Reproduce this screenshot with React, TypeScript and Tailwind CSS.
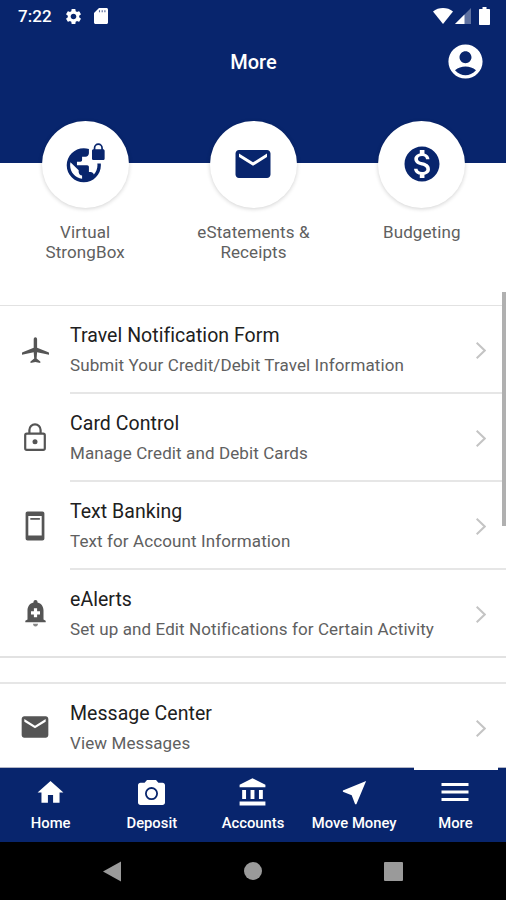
import type { ReactNode } from "react";
import {
  MdAccountBalance,
  MdAccountCircle,
  MdEmail,
  MdHome,
  MdMenu,
  MdMonetizationOn,
  MdNearMe,
  MdSettings,
} from "react-icons/md";

interface Shortcut {
  label: string;
  icon: ReactNode;
}

interface MenuItem {
  title: string;
  description: string;
  icon: ReactNode;
}

function GlobeLockIcon() {
  return (
    <svg viewBox="0 0 24 24" className="ml-px h-[41px] w-[41px]" fill="currentColor">
      <path d="M22.200 3.600v-.7a2.700 2.700 0 0 0-5.400 0v.7c-.6 0-1 .4-1 1v4.400c0 .6.4 1 1 1h5.400c.6 0 1-.4 1-1V4.600c0-.6-.4-1-1-1zm-1 0h-3.400v-.7a1.700 1.700 0 0 1 3.400 0z" />
      <path d="M18.920 12c.04.33.08.66.08 1 0 2.080-.8 3.970-2.100 5.390-.26-.81-1-1.390-1.900-1.390h-1v-3c0-.55-.45-1-1-1H7v-2h2c.55 0 1-.45 1-1V8h2c1.100 0 2-.9 2-2V3.460c-.95-.3-1.950-.46-3-.46C5.480 3 1 7.480 1 13s4.480 10 10 10 10-4.480 10-10c0-.34-.02-.67-.05-1zM10 20.930c-3.950-.49-7-3.850-7-7.930 0-.62.08-1.210.21-1.790L8 16v1c0 1.100.9 2 2 2z" />
    </svg>
  );
}

function PlaneIcon() {
  return (
    <svg viewBox="0 0 27 27" className="h-[27px] w-[27px]" fill="currentColor">
      <path d="M13.400.3c1 0 1.700.9 1.700 2v8.400l11.300 4.500c.4.2.6.5.6.9v1.700l-11.900-2.600-.5 6.200 3.700 3.100v1.600l-4.900-1-4.900 1v-1.600l3.700-3.100-.5-6.200L0 17.800v-1.700c0-.4.2-.7.6-.9l11.100-4.500V2.300c0-1.100.7-2 1.700-2z" />
    </svg>
  );
}

function LockIcon() {
  return (
    <svg viewBox="0 0 22 28" className="mb-[2px] h-[28px] w-[22px]" fill="none" stroke="currentColor" strokeWidth="2.200">
      <rect x="1.200" y="10.700" width="19.600" height="16.200" rx="1.600" />
      <path d="M5.400 10.700V7a5.600 5.600 0 0 1 11.200 0v3.700" />
      <circle cx="11" cy="18.800" r="2.500" fill="currentColor" stroke="none" />
    </svg>
  );
}

function PhoneIcon() {
  return (
    <svg viewBox="0 0 20 30" className="h-[30px] w-[20px]">
      <path
        fill="currentColor"
        fillRule="evenodd"
        d="M2.600.6h14.800c1.200 0 2 .9 2 2v24.800c0 1.100-.8 2-2 2H2.600c-1.200 0-2-.9-2-2V2.600c0-1.100.8-2 2-2zM3.300 5v19.500h13.400V5z"
      />
      <path d="M5.300 7.900h9.600" stroke="currentColor" strokeWidth="1.700" />
    </svg>
  );
}

function BellIcon() {
  return (
    <svg viewBox="0 0 21 27" className="mb-[2px] h-[27px] w-[21px]">
      <path
        fill="currentColor"
        d="M10.500 0c1.200 0 2 .9 2 2.100v.4c3.800.9 6 4 6 7.900v9.100l2.200 1.300v1.400H.3v-1.400l2.200-1.300v-9.100c0-3.900 2.200-7 6-7.900v-.4c0-1.200.8-2.100 2-2.100z"
      />
      <path fill="currentColor" opacity=".7" d="M8 23.700h5c0 1.500-1.100 2.800-2.500 2.800S8 25.200 8 23.700z" />
      <path d="M10.500 8.300v9M6 12.800h9" stroke="white" strokeWidth="3.200" />
    </svg>
  );
}

function CameraIcon() {
  return (
    <svg viewBox="0 0 27 25" className="h-[25px] w-[27px]">
      <path
        fill="currentColor"
        d="M9 0h9l2.400 2.700h4.100C25.900 2.700 27 3.800 27 5.200v17.300c0 1.400-1.100 2.500-2.500 2.500h-22C1.100 25 0 23.900 0 22.500V5.200c0-1.400 1.100-2.500 2.500-2.500h4.100z"
      />
      <circle cx="13.500" cy="13.600" r="5.600" fill="none" stroke="#08256d" strokeWidth="1.800" />
    </svg>
  );
}

const shortcuts: Shortcut[] = [
  { label: "Virtual StrongBox", icon: <GlobeLockIcon /> },
  { label: "eStatements & Receipts", icon: <MdEmail className="h-[42px] w-[42px]" /> },
  { label: "Budgeting", icon: <MdMonetizationOn className="h-[42px] w-[42px]" /> },
];

const services: MenuItem[] = [
  {
    title: "Travel Notification Form",
    description: "Submit Your Credit/Debit Travel Information",
    icon: <PlaneIcon />,
  },
  {
    title: "Card Control",
    description: "Manage Credit and Debit Cards",
    icon: <LockIcon />,
  },
  {
    title: "Text Banking",
    description: "Text for Account Information",
    icon: <PhoneIcon />,
  },
  {
    title: "eAlerts",
    description: "Set up and Edit Notifications for Certain Activity",
    icon: <BellIcon />,
  },
];

const messages: MenuItem[] = [
  {
    title: "Message Center",
    description: "View Messages",
    icon: <MdEmail className="mb-[2px] h-[32px] w-[32px]" />,
  },
];

const tabs: Shortcut[] = [
  { label: "Home", icon: <MdHome className="h-[31px] w-[31px]" /> },
  { label: "Deposit", icon: <CameraIcon /> },
  { label: "Accounts", icon: <MdAccountBalance className="h-[31px] w-[31px]" /> },
  { label: "Move Money", icon: <MdNearMe className="h-[31px] w-[31px]" /> },
  { label: "More", icon: <MdMenu className="h-[36px] w-[36px]" /> },
];

function StatusBar() {
  return (
    <div className="flex h-8 items-center pl-[18px] pr-[16px]">
      <span className="text-[17px] font-medium leading-8 tracking-[0.1px]">7:22</span>
      <MdSettings className="ml-[12px] h-[19px] w-[19px]" />
      <svg viewBox="0 0 14 16" className="ml-[11px] h-4 w-[14px]">
        <path fill="currentColor" d="M5 0h7.500C13.300 0 14 .7 14 1.500v13c0 .8-.7 1.500-1.500 1.500h-11C.7 16 0 15.300 0 14.500V5z" />
        <path d="M5.500 2.200v2M8.200 2.200v2M10.900 2.200v2" stroke="#08256d" strokeWidth="1.100" opacity=".7" />
      </svg>
      <svg viewBox="0 0 20 16" className="ml-auto h-4 w-5" fill="currentColor">
        <path d="M0 3.400C5.500-1.100 14.500-1.100 20 3.400L10 16z" />
      </svg>
      <svg viewBox="0 0 16 16" className="ml-[2px] h-4 w-4" fill="currentColor">
        <path d="M16 0v16H0z" opacity=".35" />
        <path d="M9.500 6.500V16H0z" />
      </svg>
      <svg viewBox="0 0 11 18" className="ml-[8px] h-[18px] w-[11px]" fill="currentColor">
        <path d="M3.500 0h4v2H10c.6 0 1 .4 1 1v14c0 .6-.4 1-1 1H1c-.6 0-1-.4-1-1V3c0-.6.4-1 1-1h2.500z" />
      </svg>
    </div>
  );
}

function MenuRow({ item, divider }: { item: MenuItem; divider: boolean }) {
  return (
    <div className="flex h-[88px] shrink-0">
      <div className="flex w-[70px] shrink-0 items-center justify-center text-[#555555]">{item.icon}</div>
      <div className={divider ? "flex flex-1 border-b-2 border-[#e6e6e6]" : "flex flex-1 pb-[2px]"}>
        <div className="flex-1 whitespace-nowrap pt-[17px]">
          <h2 className="text-[19.5px] leading-[26px] tracking-[0.04px] text-[#202020]">{item.title}</h2>
          <p className="mt-[4px] text-[17px] leading-[24px] tracking-[0.1px] text-[#606060]">{item.description}</p>
        </div>
        <svg
          viewBox="0 0 10 17"
          className="mr-[20px] mt-[2px] h-[17px] w-[10px] self-center"
          fill="none"
          stroke="#c4c4c4"
          strokeWidth="2"
        >
          <path d="M.7.8 8.700 8.500.7 16.200" />
        </svg>
      </div>
    </div>
  );
}

export default function App() {
  return (
    <div className="relative flex h-[900px] w-[506px] flex-col overflow-hidden bg-white font-['Roboto',sans-serif]">
      {/* Header */}
      <header className="h-[163px] shrink-0 bg-[#08256d] text-white">
        <StatusBar />
        <div className="grid h-[58px] grid-cols-3 items-center pl-px">
          <h1 className="col-start-2 pt-px text-center text-[20px] font-medium leading-6">More</h1>
          <MdAccountCircle className="mr-[20px] h-[41px] w-[41px] justify-self-end" />
        </div>
      </header>

      {/* Shortcuts, pulled up over the header edge */}
      <section className="relative -mt-[42px] grid h-[184px] shrink-0 grid-cols-3 pl-px">
        {shortcuts.map((shortcut) => (
          <div key={shortcut.label} className="flex flex-col items-center">
            <div className="flex h-[87px] w-[87px] items-center justify-center rounded-full bg-white pb-[2px] text-[#08256d] shadow-[0_1px_4px_rgba(0,0,0,0.18)]">
              {shortcut.icon}
            </div>
            <p className="mt-[14px] w-[130px] text-center text-[17px] leading-[20px] tracking-[0.1px] text-[#606060]">
              {shortcut.label}
            </p>
          </div>
        ))}
      </section>

      {/* Menu */}
      <main className="flex min-h-0 flex-1 flex-col overflow-hidden">
        <section className="h-[353px] shrink-0 border-b-2 border-t border-[#e2e2e2]">
          {services.map((item, index) => (
            <MenuRow key={item.title} item={item} divider={index < services.length - 1} />
          ))}
        </section>
        <section className="mt-[24px] shrink-0 border-t-2 border-[#e6e6e6]">
          {messages.map((item) => (
            <MenuRow key={item.title} item={item} divider={false} />
          ))}
        </section>
      </main>
      <div className="absolute right-0 top-[292px] h-[234px] w-1 bg-[#b0b0b0]" />

      {/* Tab bar */}
      <nav className="grid h-[75px] shrink-0 grid-cols-5 border-t border-[#b3b6c6] bg-[#08256d] text-white">
        {tabs.map((tab) => (
          <div key={tab.label} className="relative flex flex-col items-center">
            {tab.label === "More" && <span className="absolute -top-px left-[9.6px] h-[3px] w-[84px] bg-white" />}
            <div className="mt-[9px] flex h-[30px] items-center">{tab.icon}</div>
            <span className="mt-[6px] whitespace-nowrap text-[14.8px] font-medium leading-5">{tab.label}</span>
          </div>
        ))}
      </nav>

      {/* System navigation */}
      <footer className="flex h-[58px] shrink-0 items-center justify-between bg-black pl-[103px] pr-[103px] text-[#9a9a9a]">
        <svg viewBox="0 0 19 21" className="h-[21px] w-[19px]" fill="currentColor">
          <path d="M18 .5v20L0 10.500z" />
        </svg>
        <div className="h-[18px] w-[18px] rounded-full bg-[#9a9a9a]" />
        <div className="h-[19px] w-[19px] rounded-[1px] bg-[#9a9a9a]" />
      </footer>
    </div>
  );
}
